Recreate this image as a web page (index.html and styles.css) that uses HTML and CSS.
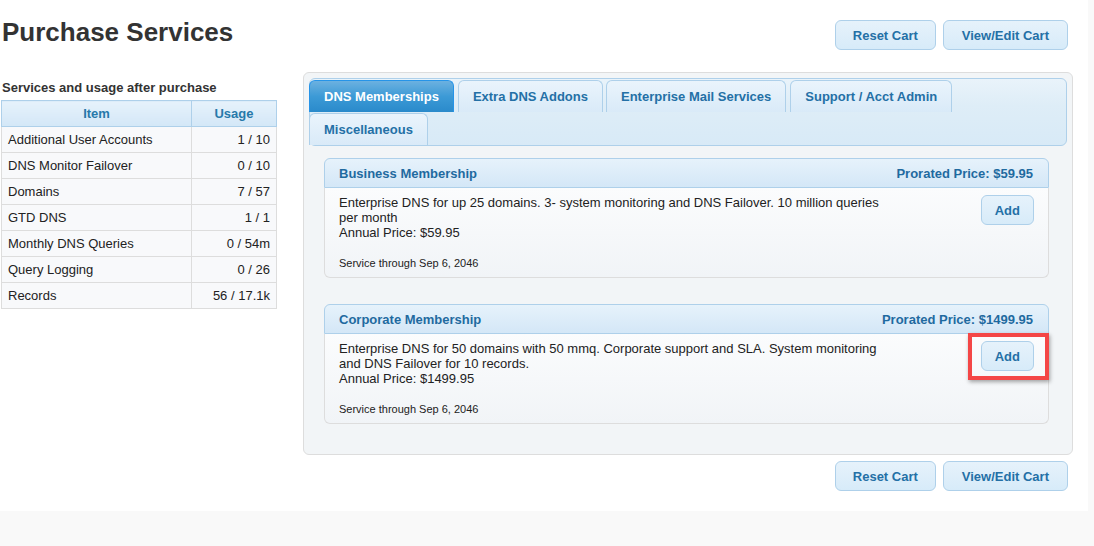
FILE: index.html
```html
<!DOCTYPE html>
<html lang="en">
<head>
    <meta charset="UTF-8">
    <meta name="viewport" content="width=device-width, initial-scale=1.0">
    <title>Purchase Services</title>
    <link rel="stylesheet" href="styles.css">
</head>
<body>
    <div class="page">
        <div class="left-col">
            <h1>Purchase Services</h1>
            <h3 class="usage-title">Services and usage after purchase</h3>
            <table class="usage">
                <thead>
                    <tr><th>Item</th><th>Usage</th></tr>
                </thead>
                <tbody>
                    <tr><td>Additional User Accounts</td><td class="num">1 / 10</td></tr>
                    <tr><td>DNS Monitor Failover</td><td class="num">0 / 10</td></tr>
                    <tr><td>Domains</td><td class="num">7 / 57</td></tr>
                    <tr><td>GTD DNS</td><td class="num">1 / 1</td></tr>
                    <tr><td>Monthly DNS Queries</td><td class="num">0 / 54m</td></tr>
                    <tr><td>Query Logging</td><td class="num">0 / 26</td></tr>
                    <tr><td>Records</td><td class="num">56 / 17.1k</td></tr>
                </tbody>
            </table>
        </div>

        <div class="right-col">
            <div class="cart-actions">
                <button class="btn">Reset Cart</button>
                <button class="btn">View/Edit Cart</button>
            </div>

            <div class="tabs">
                <ul class="tab-nav">
                    <li class="tab active">DNS Memberships</li>
                    <li class="tab">Extra DNS Addons</li>
                    <li class="tab">Enterprise Mail Services</li>
                    <li class="tab">Support / Acct Admin</li>
                    <li class="tab">Miscellaneous</li>
                </ul>

                <div class="card">
                    <div class="card-head">
                        <span>Business Membership</span>
                        <span>Prorated Price: $59.95</span>
                    </div>
                    <div class="card-body">
                        <div class="desc">
                            <p>Enterprise DNS for up 25 domains. 3- system monitoring and DNS Failover. 10 million queries per month<br>Annual Price: $59.95</p>
                            <p class="through">Service through Sep 6, 2046</p>
                        </div>
                        <div class="add-wrap">
                            <button class="btn btn-add">Add</button>
                        </div>
                    </div>
                </div>

                <div class="card">
                    <div class="card-head">
                        <span>Corporate Membership</span>
                        <span>Prorated Price: $1499.95</span>
                    </div>
                    <div class="card-body">
                        <div class="desc">
                            <p>Enterprise DNS for 50 domains with 50 mmq. Corporate support and SLA. System monitoring and DNS Failover for 10 records.<br>Annual Price: $1499.95</p>
                            <p class="through">Service through Sep 6, 2046</p>
                        </div>
                        <div class="add-wrap">
                            <button class="btn btn-add">Add</button>
                            <span class="highlight"></span>
                        </div>
                    </div>
                </div>
            </div>

            <div class="cart-actions bottom">
                <button class="btn">Reset Cart</button>
                <button class="btn">View/Edit Cart</button>
            </div>
        </div>
    </div>
</body>
</html>
```

FILE: styles.css
```css
body, html {
    margin: 0;
    background: #f9f9f9;
    font-family: 'Liberation Sans', Arial, sans-serif;
    color: #362b36;
}
.page {
    width: 1088px;
    height: 511px;
    background: #fff;
    display: flex;
    box-sizing: border-box;
}
.left-col {
    width: 276px;
    margin-left: 1px;
}
h1 {
    margin: 17px 0 0 1px;
    font-size: 26px;
    line-height: 30px;
    color: #333;
}
.usage-title {
    margin: 33px 0 5px 1px;
    font-size: 13px;
    line-height: 15px;
    color: #333;
}
.usage {
    width: 276px;
    border-collapse: collapse;
    font-size: 13px;
}
.usage th, .usage td {
    height: 25px;
    padding: 0 6px;
    line-height: 15px;
}
.usage th {
    border: 1px solid #aed0ea;
    background: linear-gradient(#e6f2fb, #d3e7f7);
    color: #2779aa;
    font-weight: bold;
}
.usage th:first-child {
    width: 177px;
}
.usage td {
    border: 1px solid #dddddd;
    background: #f8f9fb;
    color: #222;
}
.usage td.num {
    text-align: right;
}
.right-col {
    width: 770px;
    margin-left: 26px;
}
.cart-actions {
    display: flex;
    justify-content: flex-end;
    gap: 7px;
    padding: 20px 5px 0 0;
}
.cart-actions.bottom {
    padding-top: 6px;
}
.btn {
    height: 30px;
    padding: 0 18px;
    font-family: inherit;
    font-size: 13px;
    font-weight: bold;
    color: #2470a6;
    background: linear-gradient(#e6f2fb, #d7ebf9);
    border: 1px solid #aed0ea;
    border-radius: 6px;
    cursor: pointer;
}
.cart-actions .btn:first-child {
    padding: 0 17px;
}
.tabs {
    margin-top: 22px;
    border: 1px solid #dddddd;
    border-radius: 6px;
    background: #f2f5f7;
    padding: 5px 5px 30px;
}
.tab-nav {
    list-style: none;
    margin: 0;
    padding: 1px 0 0;
    display: flex;
    flex-wrap: wrap;
    column-gap: 4px;
    row-gap: 1px;
    border: 1px solid #aed0ea;
    border-radius: 6px;
    background: linear-gradient(#e9f3fa, #deedf7 40%, #d8eaf7);
}
.tab {
    height: 32px;
    line-height: 31px;
    padding: 0 14px;
    font-size: 13px;
    font-weight: bold;
    color: #2470a6;
    border: 1px solid #aed0ea;
    border-bottom: 0;
    border-radius: 6px 6px 0 0;
    background: linear-gradient(#eaf4fc, #d9eaf8);
    box-sizing: border-box;
}
.tab:first-child, .tab:last-child {
    margin-left: -1px;
}
.tab:nth-child(3) {
    margin-left: -1px;
}
.tab.active {
    color: #fff;
    border-color: #2694e8;
    background: linear-gradient(#6cb1e0, #3c9ad6 50%, #2a8acb);
}
.card {
    margin: 12px 18px 0 15px;
}
.card + .card {
    margin-top: 26px;
}
.card-head {
    display: flex;
    justify-content: space-between;
    height: 28px;
    line-height: 30px;
    padding: 0 15px 0 14px;
    font-size: 13px;
    font-weight: bold;
    color: #1f6aa0;
    border: 1px solid #aed0ea;
    border-radius: 6px 6px 0 0;
    background: linear-gradient(#e6f2fb, #d4e7f7);
}
.card-body {
    display: flex;
    justify-content: space-between;
    padding: 7px 14px 7px 14px;
    border: 1px solid #dddddd;
    border-top: 0;
    border-radius: 0 0 6px 6px;
    background: linear-gradient(#fbfcfd, #f1f4f7);
}
.desc {
    width: 560px;
}
.desc p {
    margin: 0;
    font-size: 13px;
    line-height: 15px;
    color: #222;
}
.desc p.through {
    margin-top: 16px;
    font-size: 11px;
    line-height: 14px;
}
.add-wrap {
    position: relative;
    align-self: flex-start;
    margin-top: 0;
}
.btn-add {
    padding: 0 13px;
}
.highlight {
    position: absolute;
    left: -13px;
    right: -15px;
    top: -8px;
    bottom: -9px;
    border: 4px solid #f44646;
    box-shadow: 1px 2px 4px rgba(0, 0, 0, 0.35);
}
```
